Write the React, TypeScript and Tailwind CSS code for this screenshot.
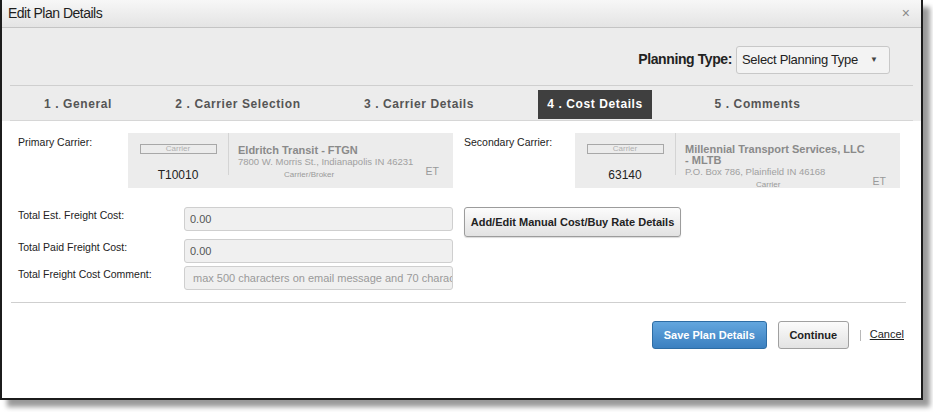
import React from 'react'

interface Tab {
  label: string
  width: string
  margin: string
  active?: boolean
}

const tabs: Tab[] = [
  { label: '1 . General', width: 'w-[88px]', margin: 'ml-[32px]' },
  { label: '2 . Carrier Selection', width: 'w-[146px]', margin: 'ml-[43px]' },
  { label: '3 . Carrier Details', width: 'w-[130px]', margin: 'ml-[43px]' },
  { label: '4 . Cost Details', width: 'w-[114px]', margin: 'ml-[54px]', active: true },
  { label: '5 . Comments', width: 'w-[107px]', margin: 'ml-[52px]' },
]

const CarrierCard: React.FC<{
  code: string
  name: React.ReactNode
  address: string
  kind: string
  kindPad: string
  top: string
}> = ({ code, name, address, kind, kindPad, top }) => (
  <div className="w-[325px] h-[55px] bg-[#ececec] flex">
    <div className="w-[100px] flex flex-col items-center pt-[11px]">
      <div className="w-[77px] h-[10px] border border-[#a8a8a8] text-[8px] leading-[8px] text-[#b0b0b0] text-center">
        Carrier
      </div>
      <div className="mt-[14px] text-[12px] leading-[14px] text-[#222]">{code}</div>
    </div>
    <div className="w-px h-[42px] bg-[#d4d4d4]" />
    <div className={`flex-1 pl-[9px] ${top}`}>
      <div className="text-[11px] leading-[11px] font-bold text-[#8a8a8a]">{name}</div>
      <div className="text-[9.5px] leading-[12px] text-[#a0a0a0]">{address}</div>
      <div className="h-0 relative">
        <span className="absolute right-[14px] -top-[3px] text-[10.5px] leading-[12px] text-[#999]">ET</span>
      </div>
      <div className={`text-[8px] leading-[14px] text-[#9a9a9a] ${kindPad}`}>{kind}</div>
    </div>
  </div>
)

const Field: React.FC<{ label: string; value?: string; placeholder?: string; className?: string }> = ({
  label,
  value,
  placeholder,
  className,
}) => (
  <div className={`flex items-start ${className || ''}`}>
    <div className="w-[166px] text-[10.5px] leading-[13px] text-[#222] pt-[2px]">{label}</div>
    <input
      readOnly
      value={value}
      placeholder={placeholder}
      className={`w-[269px] h-[24px] rounded-[3px] border border-[#cfcfcf] bg-[#f0f0f0] text-[11px] text-[#555] outline-none placeholder:text-[#9a9a9a] ${
        placeholder ? 'pl-[8px]' : 'pl-[5px]'
      }`}
    />
  </div>
)

export default function App() {
  return (
    <div className="w-[933px] h-[412px] bg-white" style={{ fontFamily: '"Liberation Sans", Arial, sans-serif' }}>
      <div className="w-[923px] h-[400px] bg-white border-l-2 border-r-2 border-b-2 border-[#1c1c1c] shadow-[7px_7px_5px_rgba(0,0,0,0.4)] flex flex-col">
        {/* title bar */}
        <div className="h-[28px] shrink-0 bg-gradient-to-b from-[#f7f7f7] to-[#e4e4e4] border-b border-[#c4c4c4] flex items-center justify-between pl-[6px] pr-[11px]">
          <span className="text-[14px] tracking-[-0.5px] text-[#1e1e1e]">Edit Plan Details</span>
          <span className="text-[14px] text-[#8a8a8a]">×</span>
        </div>

        {/* header */}
        <div className="bg-[#ececec] shrink-0">
          <div className="h-[57px] flex items-center justify-end pr-[31px]">
            <span className="text-[14px] font-bold tracking-[-0.4px] text-[#222] mr-[4px] mt-[6px]">Planning Type:</span>
            <div className="w-[154px] h-[28px] mt-[6px] rounded-[3px] border border-[#c8c8c8] bg-[#f3f3f3] flex items-center justify-between pl-[5px] pr-[11px]">
              <span className="text-[13px] tracking-[-0.3px] whitespace-nowrap text-[#222]">Select Planning Type</span>
              <span className="text-[8px] text-[#444]">▼</span>
            </div>
          </div>
          <div className="mx-[8px] border-t border-[#cfcfcf]" />
          <div className="h-[34px] flex items-center">
            {tabs.map((t) => (
              <div
                key={t.label}
                className={`${t.width} ${t.margin} h-[29px] mt-[2px] flex items-center justify-center whitespace-nowrap text-[12px] font-bold tracking-[0.6px] ${
                  t.active ? 'bg-[#3f3f3f] text-white' : 'text-[#555]'
                }`}
              >
                {t.label}
              </div>
            ))}
          </div>
          <div className="mx-[8px] border-t border-[#d6d6d6]" />
        </div>

        {/* content */}
        <div className="flex-1 bg-white">
          <div className="flex pt-[12px] pl-[16px]">
            <div className="w-[110px] text-[10.5px] text-[#222] pt-[2px]">Primary Carrier:</div>
            <CarrierCard
              code="T10010"
              name="Eldritch Transit - FTGN"
              address="7800 W. Morris St., Indianapolis IN 46231"
              kind="Carrier/Broker"
              kindPad="pl-[46px]"
              top="pt-[12px]"
            />
            <div className="w-[111px] ml-[11px] text-[10.5px] text-[#222] pt-[2px]">Secondary Carrier:</div>
            <CarrierCard
              code="63140"
              name={
                <>
                  Millennial Transport Services, LLC
                  <br />- MLTB
                </>
              }
              address="P.O. Box 786, Plainfield IN 46168"
              kind="Carrier"
              kindPad="pl-[71px]"
              top="pt-[11px]"
            />
          </div>

          <div className="flex pl-[16px] mt-[19px]">
            <div>
              <Field label="Total Est. Freight Cost:" value="0.00" />
              <Field label="Total Paid Freight Cost:" value="0.00" className="mt-[8px]" />
              <Field
                label="Total Freight Cost Comment:"
                placeholder="max 500 characters on email message and 70 characters"
                className="mt-[3px]"
              />
            </div>
            <div className="ml-[11px]">
              <button className="w-[217px] h-[30px] rounded-[3px] border border-[#9c9c9c] bg-gradient-to-b from-[#fcfcfc] to-[#e2e2e2] text-[11px] font-bold whitespace-nowrap text-[#222] shadow-[0_1px_1px_rgba(0,0,0,0.15)]">
                Add/Edit Manual Cost/Buy Rate Details
              </button>
            </div>
          </div>

          <div className="ml-[9px] mr-[15px] mt-[12px] border-t border-[#cfcfcf]" />

          <div className="flex justify-end items-center pr-[17px] mt-[18px]">
            <button className="w-[115px] h-[28px] rounded-[3px] border border-[#2e6da4] bg-gradient-to-b from-[#63a6de] to-[#3b80c0] text-white text-[11px] font-bold">
              Save Plan Details
            </button>
            <button className="w-[71px] h-[28px] ml-[11px] rounded-[3px] border border-[#a0a0a0] bg-gradient-to-b from-[#fbfbfb] to-[#e3e3e3] text-[#222] text-[11px] font-bold">
              Continue
            </button>
            <span className="ml-[11px] w-px h-[11px] bg-[#b8b8b8]" />
            <span className="ml-[9px] text-[11px] text-[#222] underline -mt-[1px]">Cancel</span>
          </div>
        </div>
      </div>
    </div>
  )
}
